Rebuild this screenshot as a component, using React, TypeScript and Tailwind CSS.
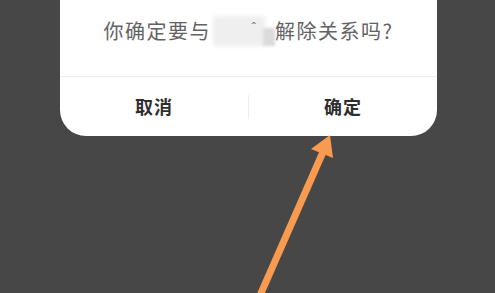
import React from "react";

const CJK = "font-['Noto_Sans_CJK_SC','Noto_Sans',sans-serif]";

function Arrow() {
  // orange annotation arrow pointing at the confirm button
  return (
    <svg
      className="absolute left-0 top-0 pointer-events-none"
      width="495"
      height="293"
      viewBox="0 0 495 293"
    >
      <line
        x1="258"
        y1="300"
        x2="323"
        y2="152"
        stroke="#f89b50"
        strokeWidth="7"
      />
      <polygon points="330,135 333,158 311,149" fill="#f89b50" />
    </svg>
  );
}

export default function App() {
  return (
    <div className={`relative w-[495px] h-[293px] overflow-hidden bg-[#474747] ${CJK}`}>
      <div className="ml-[60px] w-[377px] h-[136px] bg-white rounded-b-[26px] flex flex-col">
        {/* Message */}
        <div className="h-[77px] flex items-start justify-center pt-[16px] border-b border-[#ececec]">
          <p className="text-[20px] leading-[30px] tracking-[1.5px] text-[#626262] whitespace-nowrap flex items-center">
            <span>你确定要与</span>
            <span className="relative inline-block w-[62px] h-[30px] ml-[2px]">
              <span className="absolute left-0 top-0 w-[52px] h-[30px] bg-[#efefef] blur-[2px]" />
              <span className="absolute right-0 top-[12px] w-[12px] h-[18px] bg-[#dadada] blur-[1.5px]" />
              <span className="absolute left-[38px] top-[-4px] text-[13px] text-[#777]">ˆ</span>
            </span>
            <span>解除关系吗?</span>
          </p>
        </div>

        {/* Actions */}
        <div className="flex-1 flex items-center">
          <button className="flex-1 h-full flex items-center justify-center text-[18px] font-bold text-[#2e2e2e] tracking-[1px]">
            取消
          </button>
          <div className="w-px h-[24px] bg-[#ededed]" />
          <button className="flex-1 h-full flex items-center justify-center text-[18px] font-bold text-[#2e2e2e] tracking-[1px]">
            确定
          </button>
        </div>
      </div>
      <Arrow />
    </div>
  );
}
